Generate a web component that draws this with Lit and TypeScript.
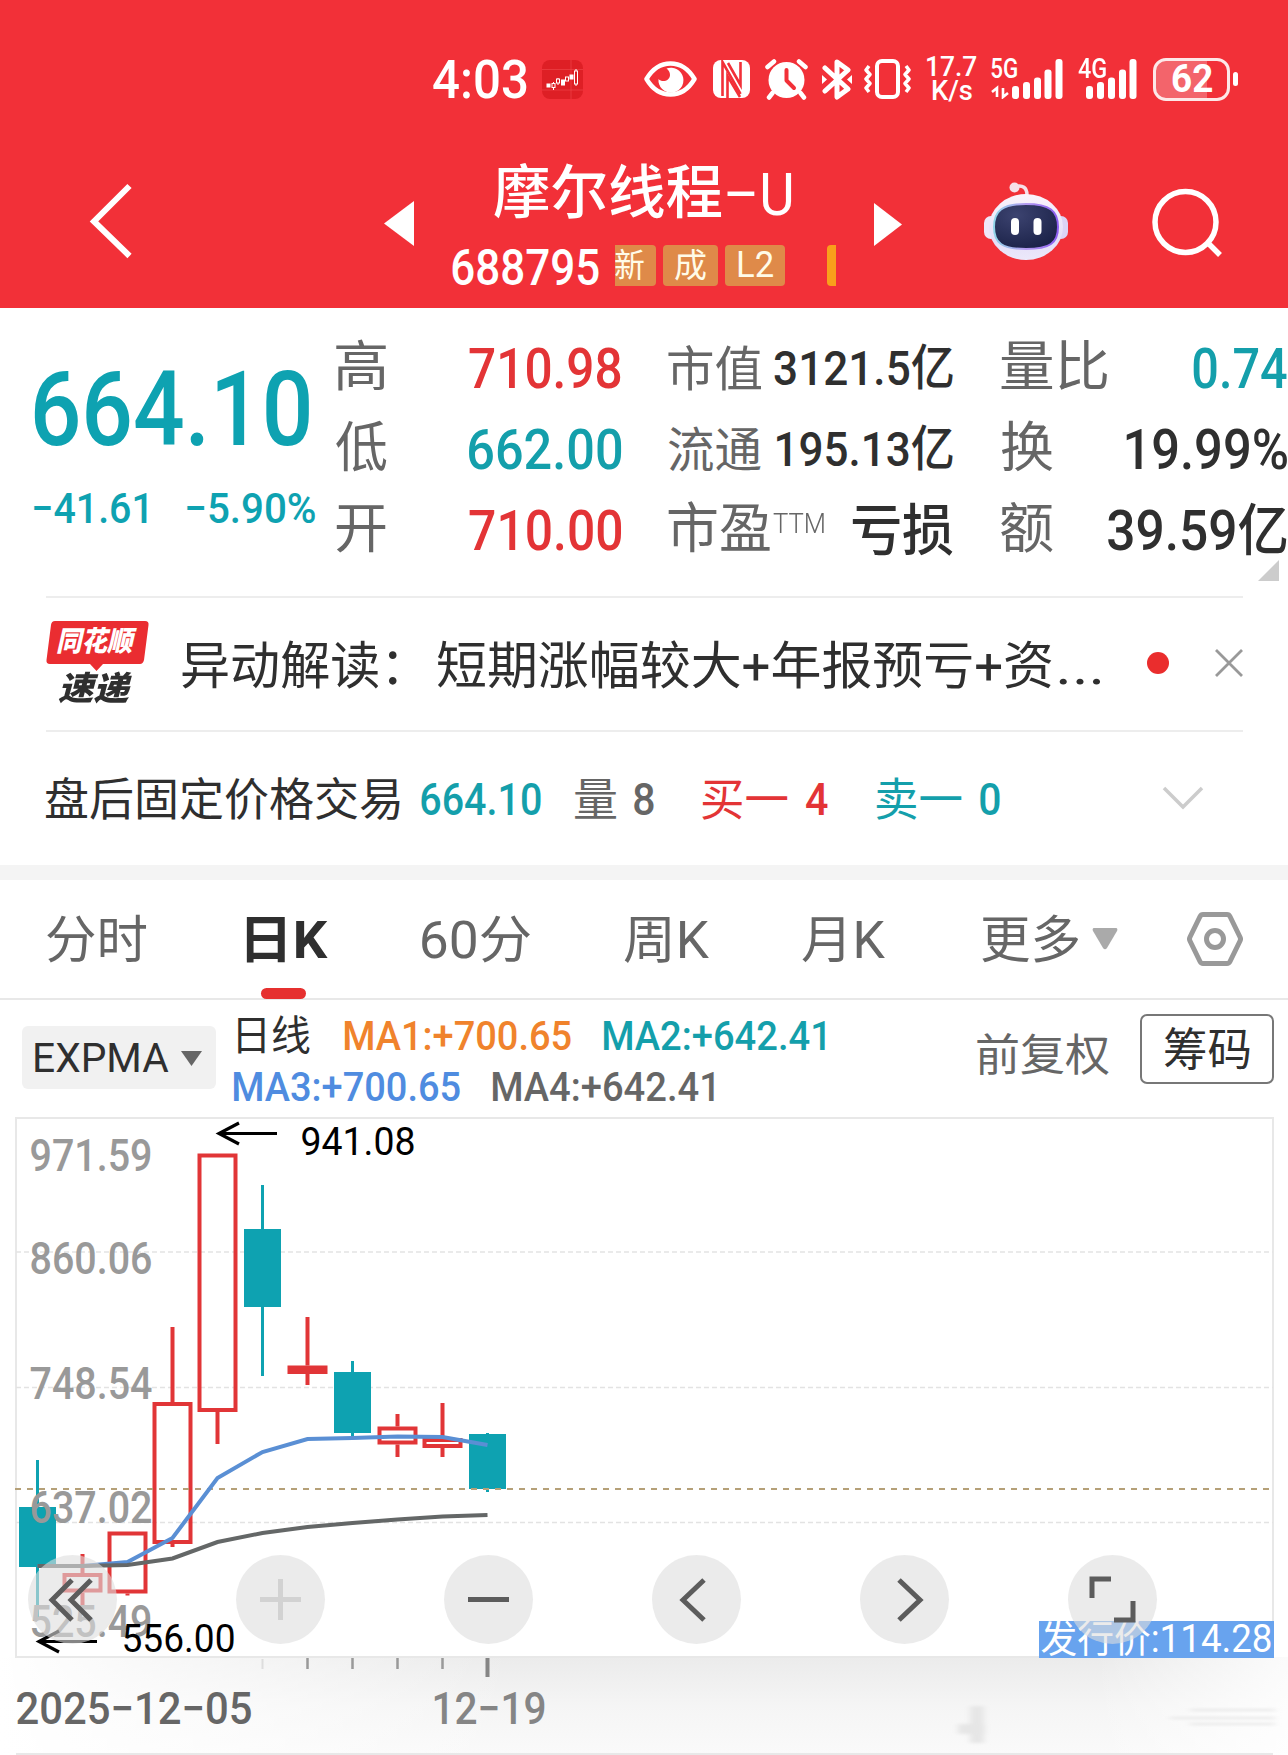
import { LitElement, html, svg, css } from "lit";
import { customElement, property } from "lit/decorators.js";

/** Single-line label whose visible glyphs span exactly `w` pixels. */
@customElement("fit-text")
class FitText extends LitElement {
  @property({ type: Number }) w = 100;
  @property() text = "";
  static styles = css`
    :host { display: block; flex: none; line-height: 1.2; white-space: pre; }
    span { display: inline-block; transform-origin: 0 50%; }
  `;
  render() {
    return html`<span>${this.text}</span>`;
  }
  updated() {
    const el = this.renderRoot.querySelector("span")!;
    const cs = getComputedStyle(el);
    const ctx = document.createElement("canvas").getContext("2d")!;
    ctx.font = `${cs.fontStyle} ${cs.fontWeight} ${cs.fontSize} ${cs.fontFamily}`;
    const m = ctx.measureText(this.text);
    const k = this.w / (m.actualBoundingBoxLeft + m.actualBoundingBoxRight);
    this.style.width = `${this.w}px`;
    el.style.transform = `translateX(${m.actualBoundingBoxLeft * k}px) scaleX(${k})`;
  }
}

const t = (text: string, w: number, cls = "") =>
  html`<fit-text class=${cls} .w=${w} .text=${text}></fit-text>`;

const FONT = css`"Roboto", "Noto Sans CJK SC", sans-serif`;

/* ---------- status bar ---------- */
@customElement("status-bar")
class StatusBar extends LitElement {
  static styles = css`
    :host { display: flex; align-items: center; height: 76px; padding: 41px 0 0 433px; color: #fff; }
    svg { display: block; flex: none; }
    .time { font-size: 53px; font-weight: 500; padding-top: 3px; }
    .app { margin-left: 15px; }
    .eye { margin-left: 61px; }
    .nfc { margin-left: 16px; }
    .alarm { margin-left: 15px; }
    .bt { margin-left: 14px; }
    .vib { margin-left: 12px; }
    .speed { display: flex; flex-direction: column; align-items: center; margin-left: 15px; font-size: 27px; font-weight: 500; width: 50px; }
    .speed fit-text { line-height: 24px; }
    .sig { display: grid; margin-left: 14px; }
    .sig > * { grid-area: 1 / 1; }
    .sig fit-text { font-size: 27px; font-weight: 500; line-height: 21px; }
    .sig.b { margin-left: 15px; }
    .batt { display: flex; align-items: center; margin-left: 16px; }
    .cell { box-sizing: border-box; width: 77px; height: 43px; border: 3px solid #fde8e8; border-radius: 13px; display: flex; align-items: center; justify-content: center;
      background: linear-gradient(90deg, #f3646b 51px, transparent 51px); font-size: 39px; font-weight: 700; }
    .nub { width: 5px; height: 14px; border-radius: 3px; background: #fff; margin-left: 3px; }
  `;
  bars(xs: number[]) {
    const tops = [27, 23, 18.5, 10.5, 0];
    return xs.map((x, i) => svg`<rect x=${x} y=${tops[i]} width="7" height=${40 - tops[i]} rx="3" fill="#fff"/>`);
  }
  render() {
    return html`
      ${t("4:03", 94, "time")}
      <svg class="app" width="41" height="39" viewBox="0 0 41 39">
        <rect width="41" height="39" rx="8" fill="#de1f25"/>
        <path d="M0 9.500H41M0 30H41M29 0V39" stroke="#f04a4e" stroke-width=".6"/>
        <g stroke="#fff" stroke-width="1" fill="none"><path d="M11.500 22V30M16 18V25M34 9V26"/>
          <rect x="5" y="24" width="3" height="3" fill="#fff"/><rect x="10" y="23.500" width="3" height="4" fill="#de1f25"/><rect x="14.500" y="19" width="3" height="4" fill="#de1f25"/><rect x="19.500" y="20" width="3" height="5" fill="#fff"/><rect x="23.500" y="17" width="3" height="4" fill="#de1f25"/><rect x="28" y="15" width="3" height="4" fill="#fff"/><rect x="32.500" y="11" width="3" height="13" fill="#de1f25"/></g>
      </svg>
      <svg class="eye" width="53" height="36" viewBox="0 0 53 36">
        <path d="M2.500 18C9 7 18 2.500 26.500 2.500S44 7 50.500 18C44 29 35 33.500 26.500 33.500S9 29 2.500 18Z" fill="none" stroke="#fff" stroke-width="4.500" stroke-linejoin="round"/>
        <path d="M22.500 7.500A12.500 12.500 0 1 1 14.500 18C18 22 26 20 26 14C26 11 24.500 9 22.500 7.500Z" fill="#fff"/>
      </svg>
      <svg class="nfc" width="37" height="38" viewBox="0 0 37 38">
        <rect width="37" height="38" rx="8" fill="#fff"/>
        <path d="M9.500 36V2L27.500 34M9.500 2" fill="none" stroke="#f23038" stroke-width="2.600"/>
        <path d="M27.500 2V25L15 3M14.500 38V16L27 37" fill="none" stroke="#f23038" stroke-width="2.600"/>
      </svg>
      <svg class="alarm" width="43" height="41" viewBox="0 0 43 41">
        <circle cx="21.500" cy="21" r="18" fill="#fff"/>
        <path d="M2.500 8L9 2.500M40.500 8L34 2.500M7.500 34L4 38.500M35.500 34L39 38.500" stroke="#fff" stroke-width="4.500" stroke-linecap="round"/>
        <path d="M21.500 11V21.500L29 29" fill="none" stroke="#f23038" stroke-width="4" stroke-linecap="round" stroke-linejoin="round"/>
      </svg>
      <svg class="bt" width="30" height="41" viewBox="0 0 30 41">
        <path d="M3 9L26 30L15 38V3L26 11L3 32" fill="none" stroke="#fff" stroke-width="5" stroke-linejoin="round" stroke-linecap="round"/>
        <path d="M0 16L5 20.500L0 25ZM30 16L25 20.500L30 25Z" fill="#fff"/>
      </svg>
      <svg class="vib" width="48" height="40" viewBox="0 0 48 40">
        <rect x="13" y="2" width="21" height="36" rx="5" fill="none" stroke="#fff" stroke-width="4"/>
        <path d="M5 7L2 11L6 15.500L2 20L6 24.500L2 29L5 33M42 7L45 11L41 15.500L45 20L41 24.500L45 29L42 33" fill="none" stroke="#fff" stroke-width="3.500" stroke-linejoin="round"/>
      </svg>
      <div class="speed">${t("17.7", 50)}${t("K/s", 40)}</div>
      <div class="sig">
        <svg width="72" height="40" viewBox="0 0 72 40">${this.bars([21, 32, 43, 53.5, 64.5])}
          <path d="M6 38V29L1 33M12 29V38L17 34" fill="none" stroke="#fff" stroke-width="2.600"/></svg>
        ${t("5G", 26)}
      </div>
      <div class="sig b">
        <svg width="59" height="40" viewBox="0 0 59 40">${this.bars([8, 19, 30, 41, 51.5])}</svg>
        ${t("4G", 28)}
      </div>
      <div class="batt"><div class="cell">${t("62", 40)}</div><div class="nub"></div></div>
    `;
  }
}

/* ---------- title bar ---------- */
@customElement("title-bar")
class TitleBar extends LitElement {
  static styles = css`
    :host { display: flex; height: 191px; color: #fff; }
    svg { display: block; flex: none; }
    .back { margin: 66px 0 0 88px; }
    .prev { margin: 84px 0 0 251px; }
    .mid { width: 385px; margin-left: 38px; display: flex; flex-direction: column; }
    .name { display: flex; gap: 5px; margin: 42px 0 0 42px; height: 70px; font-size: 58px; font-weight: 500; }
    .name .u { font-size: 60px; font-weight: 400; }
    .code { display: flex; align-items: center; height: 41px; margin-top: 16px; }
    .num { font-size: 50px; font-weight: 500; width: 147px; padding-top: 4px; }
    .tags { display: flex; margin-left: 16px; width: 221px; overflow: hidden; }
    .tag { box-sizing: border-box; height: 41px; border-radius: 4px; background: #df8a49; display: flex; align-items: center; justify-content: center; font-size: 33px; color: #fffbe8; flex: none; }
    .n { width: 41px; border-radius: 0 4px 4px 0; justify-content: flex-start; margin-right: 7px; }
    .c { width: 55px; margin-right: 7px; }
    .l { width: 60px; font-size: 36px; }
    .more { width: 9px; background: #f9a01b; margin-left: 42px; border-radius: 4px 0 0 4px; }
    .next { margin: 86px 0 0 37px; }
    .bot { margin: 65px 0 0 82px; }
    .find { margin: 71px 0 0 84px; }
  `;
  render() {
    return html`
      <svg class="back" width="45" height="76" viewBox="0 0 45 76"><path d="M41.500 3L6 38.500L41.500 73" fill="none" stroke="#fff" stroke-width="6"/></svg>
      <svg class="prev" width="30" height="45" viewBox="0 0 30 45"><path d="M30 0V45L0 22.500Z" fill="#fff"/></svg>
      <div class="mid">
        <div class="name">${t("摩尔线程", 228)}${t("–U", 64, "u")}</div>
        <div class="code">
          ${t("688795", 147, "num")}
          <div class="tags">
            <div class="tag n">${t("新", 29)}</div><div class="tag c">${t("成", 31)}</div><div class="tag l">${t("L2", 35)}</div><div class="tag more"></div>
          </div>
        </div>
      </div>
      <svg class="next" width="28" height="43" viewBox="0 0 28 43"><path d="M0 0V43L28 21.500Z" fill="#fff"/></svg>
      <svg class="bot" width="84" height="78" viewBox="0 0 84 78">
        <defs>
          <linearGradient id="shell" x1="0" y1="0" x2="0" y2="1"><stop offset="0" stop-color="#fbf4fb"/><stop offset=".7" stop-color="#e4def8"/><stop offset="1" stop-color="#ece8fa"/></linearGradient>
          <linearGradient id="rim" x1="0" y1="0" x2="1" y2="0"><stop offset="0" stop-color="#8fd3e8"/><stop offset=".5" stop-color="#b49af0"/><stop offset="1" stop-color="#8b5cf0"/></linearGradient>
          <radialGradient id="visor" cx=".35" cy=".25" r=".8"><stop offset="0" stop-color="#3c4370"/><stop offset="1" stop-color="#1b2248"/></radialGradient>
        </defs>
        <path d="M30 5C39 2 43 6 43 13" fill="none" stroke="#f6dfe8" stroke-width="3.500"/><circle cx="30.500" cy="5.500" r="5" fill="#f6dfe8"/>
        <rect x="0" y="34" width="14" height="23" rx="7" fill="#efe6f8"/><rect x="70" y="34" width="14" height="23" rx="7" fill="#dcd4f6"/>
        <ellipse cx="42" cy="45" rx="37" ry="33" fill="url(#shell)"/>
        <path d="M42 22C66 22 74 29 74 45S66 67 42 67S10 61 10 45S18 22 42 22Z" fill="url(#visor)" stroke="url(#rim)" stroke-width="2"/>
        <rect x="27" y="36" width="8" height="17" rx="4" fill="#fff"/><rect x="49.500" y="36" width="8" height="17" rx="4" fill="#fff"/>
      </svg>
      <svg class="find" width="72" height="70" viewBox="0 0 72 70"><circle cx="33.500" cy="34" r="30.500" fill="none" stroke="#fff" stroke-width="5.500"/><path d="M55 54L68 67" stroke="#fff" stroke-width="5.500"/></svg>
    `;
  }
}

/* ---------- quote panel ---------- */
@customElement("quote-panel")
class QuotePanel extends LitElement {
  static styles = css`
    :host { display: grid; grid-template-columns: 336px 285px 332px 334px; height: 288px; position: relative; color: #2f2f2f; }
    .price { padding: 40px 0 0 34px; color: #0ea2b1; }
    .big { font-size: 104px; font-weight: 500; }
    .chg { display: flex; gap: 40px; font-size: 43px; font-weight: 500; margin-top: 10px; }
    .col { padding-top: 21px; }
    .c2 { padding-left: 47px; }
    .c3 { padding-left: 48px; }
    .row { height: 81px; display: flex; align-items: center; justify-content: space-between; }
    .lab { font-size: 54px; color: #666; margin-top: -3px; }
    .s { font-size: 48px; margin-top: 0; }
    .val { font-size: 56px; font-weight: 500; }
    .m { font-size: 49px; }
    .up { color: #e33436; } .down { color: #149fab; }
    .ttm { font-size: 28px; font-weight: 300; color: #666; margin: -16px 28px 0 3px; }
    .corner { position: absolute; right: 9px; bottom: 15px; }
  `;
  render() {
    return html`
      <div class="price">${t("664.10", 275, "big")}<div class="chg">${t("−41.61", 113)}${t("−5.90%", 128)}</div></div>
      <div class="col">
        <div class="row">${t("高", 50, "lab")}${t("710.98", 152, "val up")}</div>
        <div class="row">${t("低", 51, "lab")}${t("662.00", 152, "val down")}</div>
        <div class="row">${t("开", 50, "lab")}${t("710.00", 152, "val up")}</div>
      </div>
      <div class="col c2">
        <div class="row">${t("市值", 93, "lab s")}${t("3121.5亿", 179, "val m")}</div>
        <div class="row">${t("流通", 93, "lab s")}${t("195.13亿", 176, "val m")}</div>
        <div class="row">${t("市盈", 102, "lab")}${t("TTM", 51, "ttm")}${t("亏损", 101, "val")}</div>
      </div>
      <div class="col c3">
        <div class="row">${t("量比", 106, "lab")}${t("0.74", 94, "val down")}</div>
        <div class="row">${t("换", 52, "lab")}${t("19.99%", 161, "val")}</div>
        <div class="row">${t("额", 52, "lab")}${t("39.59亿", 179, "val")}</div>
      </div>
      <svg class="corner" width="21" height="21" viewBox="0 0 21 21"><path d="M21 0V21H0Z" fill="#ccc"/></svg>
    `;
  }
}

/* ---------- news + after-hours rows ---------- */
@customElement("info-rows")
class InfoRows extends LitElement {
  static styles = css`
    :host { display: block; color: #2f2f2f; }
    .news, .after { display: flex; align-items: center; margin: 0 45px 0 46px; border-top: 2px solid #ededed; box-sizing: border-box; height: 134px; }
    .news { padding-bottom: 2px; }
    .after { height: 135px; }
    .logo { display: flex; flex-direction: column; align-items: flex-start; width: 103px; }
    .flag { display: grid; width: 103px; height: 50px; }
    .flag > * { grid-area: 1 / 1; }
    .flag fit-text { margin: 6px 0 0 11px; font: italic 900 28px/30px "Roboto", "Noto Sans CJK SC", sans-serif; color: #fff; }
    .sub { font: italic 900 33px/34px "Roboto", "Noto Sans CJK SC", sans-serif; margin: 1px 0 0 12px; }
    .txt { font-size: 51px; margin-left: 33px; padding-top: 7px; }
    .t2 { margin-left: 40px; }
    .t3 { margin-left: 7px; }
    .dot { width: 22px; height: 22px; border-radius: 50%; background: #ea2d2d; margin-left: 46px; }
    .x { margin-left: 46px; }
    .after { font-size: 45px; }
    .after fit-text { padding-top: 5px; }
    .after .num { font-weight: 500; padding-top: 3px; }
    .up { color: #e33436; } .down { color: #149fab; } .g { color: #666; }
    .a { margin-left: 21px; } .b { margin-left: 34px; } .c { margin-left: 18px; } .d { margin-left: 48px; }
    .chev { margin-left: 162px; margin-top: -2px; }
    .band { height: 15px; background: #f4f4f4; }
  `;
  render() {
    return html`
      <div class="news">
        <div class="logo">
          <div class="flag"><svg width="103" height="50" viewBox="0 0 103 50"><path d="M9 0H99Q103 0 102.500 4L98 39Q97 43 94 43H57L50.500 50L44 43H4Q0 43 .5 39L5 4Q5.500 0 9 0Z" fill="#ea2d31"/></svg>${t("同花顺", 80)}</div>
          ${t("速递", 75, "sub")}
        </div>
        ${t("异动解读：", 215, "txt")}${t("短期涨幅较大+年报预亏+资", 615, "txt t2")}${t("...", 42, "txt t3")}
        <div class="dot"></div>
        <svg class="x" width="28" height="28" viewBox="0 0 28 28"><path d="M1 1L27 27M27 1L1 27" stroke="#999" stroke-width="2.800"/></svg>
      </div>
      <div class="after">
        ${t("盘后固定价格交易", 354)}
        ${t("664.10", 120, "num down a")}
        ${t("量", 41, "g b")}${t("8", 20, "num g c")}
        ${t("买一", 86, "up d")}${t("4", 22, "num up c")}
        ${t("卖一", 86, "down d")}${t("0", 20, "num down c")}
        <svg class="chev" width="42" height="24" viewBox="0 0 42 24"><path d="M2 2L21 21L40 2" fill="none" stroke="#ccc" stroke-width="3.500"/></svg>
      </div>
      <div class="band"></div>
    `;
  }
}

/* ---------- period tabs + indicator legend ---------- */
@customElement("chart-tabs")
class ChartTabs extends LitElement {
  static styles = css`
    :host { display: block; color: #666; }
    .tabs { display: flex; align-items: center; box-sizing: border-box; height: 120px; padding-left: 47px; border-bottom: 2px solid #e8e8e8; font-size: 51px; }
    .tabs > fit-text { padding-top: 4px; }
    .on { display: flex; flex-direction: column; align-items: flex-start; margin: 31px 0 0 99px; color: #2f2f2f; font-weight: 700; }
    .bar { width: 45px; height: 11px; border-radius: 6px; background: #e6302f; margin: 17px 0 0 15px; }
    .t3 { margin-left: 94px; } .t4 { margin-left: 94px; } .t5 { margin-left: 93px; } .t6 { margin-left: 97px; }
    .tri { margin-left: 13px; }
    .hex { margin-left: 69px; }
    .legend { display: flex; height: 117px; }
    .ind { width: 194px; height: 63px; margin: 26px 0 0 22px; box-sizing: border-box; padding: 2px 0 0 13px; border-radius: 6px; background: #f1f1f1; display: flex; align-items: center; gap: 12px; font-size: 41px; color: #2f2f2f; }
    .lines { margin: 11px 0 0 17px; width: 744px; font-size: 41px; font-weight: 500; }
    .lines div { display: flex; height: 51px; align-items: center; }
    .day { color: #2f2f2f; margin-left: 5px; font-weight: 400; }
    .m1 { color: #f0832c; margin-left: 34px; } .m2 { color: #149fab; margin-left: 32px; }
    .m3 { color: #4f8ce0; } .m4 { margin-left: 32px; }
    .adj { font-size: 44px; margin-top: 30px; }
    .chip { box-sizing: border-box; width: 134px; height: 70px; margin: 14px 0 0 31px; border: 2px solid #777; border-radius: 7px; display: flex; align-items: center; justify-content: center; font-size: 45px; color: #2f2f2f; padding-top: 4px; }
  `;
  render() {
    return html`
      <div class="tabs">
        ${t("分时", 100)}
        <div class="on">${t("日K", 82)}<div class="bar"></div></div>
        ${t("60分", 108, "t3")}${t("周K", 85, "t4")}${t("月K", 83, "t5")}${t("更多", 97, "t6")}
        <svg class="tri" width="26" height="22" viewBox="0 0 26 22"><path d="M1.500 0H24.500Q26 1 25 3L15 20Q13 22.500 11 20L1 3Q0 1 1.500 0Z" fill="#aaa"/></svg>
        <svg class="hex" width="56" height="54" viewBox="0 0 56 54"><path d="M16 2.500H40Q42 2.500 43 4.500L53 25Q54 27 53 29L43 49.500Q42 51.500 40 51.500H16Q14 51.500 13 49.500L3 29Q2 27 3 25L13 4.500Q14 2.500 16 2.500Z" fill="none" stroke="#999" stroke-width="5"/><circle cx="28" cy="27" r="8.500" fill="none" stroke="#999" stroke-width="5"/></svg>
      </div>
      <div class="legend">
        <div class="ind">${t("EXPMA", 134)}<svg width="21" height="15" viewBox="0 0 21 15"><path d="M0 0H21L10.500 15Z" fill="#666"/></svg></div>
        <div class="lines">
          <div>${t("日线", 72, "day")}${t("MA1:+700.65", 227, "m1")}${t("MA2:+642.41", 222, "m2")}</div>
          <div>${t("MA3:+700.65", 227, "m3")}${t("MA4:+642.41", 222, "m4")}</div>
        </div>
        ${t("前复权", 132, "adj")}
        <div class="chip">${t("筹码", 86)}</div>
      </div>
    `;
  }
}

/* ---------- candlestick chart ---------- */
interface Candle { x: number; up: boolean; top: number; bottom: number; hi: number; lo: number; }
const CANDLES: Candle[] = [
  { x: 37.5, up: false, top: 1507, bottom: 1567, hi: 1460, lo: 1620 },
  { x: 82.5, up: true, top: 1573, bottom: 1592.5, hi: 1554, lo: 1606 },
  { x: 127.5, up: true, top: 1531.5, bottom: 1593.5, hi: 1531.5, lo: 1595.5 },
  { x: 172.5, up: true, top: 1402, bottom: 1544, hi: 1327, lo: 1547 },
  { x: 217.5, up: true, top: 1153.5, bottom: 1412, hi: 1153.5, lo: 1444 },
  { x: 262.5, up: false, top: 1229, bottom: 1307, hi: 1185, lo: 1376 },
  { x: 307.5, up: true, top: 1365.5, bottom: 1374, hi: 1317, lo: 1385 },
  { x: 352.5, up: false, top: 1372, bottom: 1433, hi: 1361, lo: 1436 },
  { x: 397.5, up: true, top: 1426.5, bottom: 1444.5, hi: 1414, lo: 1457 },
  { x: 442.5, up: true, top: 1438, bottom: 1448, hi: 1403, lo: 1457 },
  { x: 487.5, up: false, top: 1434, bottom: 1489, hi: 1433, lo: 1492 },
];
const FAST = [1566, 1566, 1562, 1538, 1478, 1452, 1439, 1438, 1436.5, 1437, 1445];
const SLOW = [1566, 1566, 1565, 1558.5, 1542, 1533, 1527, 1523, 1519.5, 1516.5, 1515];
const points = (ys: number[]) => ys.map((y, i) => `${CANDLES[i].x},${y}`).join(" ");

@customElement("k-chart")
class KChart extends LitElement {
  static styles = css`
    :host { display: block; position: relative; height: 638px; }
    .plot { display: block; }
    .axis text, .dates text { font-size: 45px; font-weight: 500; fill: #999; }
    .mark text { font-size: 38px; fill: #000; }
    .issue { font-size: 38px; fill: #fff; }
    .dates .first { fill: #666; }
    .dates .last { fill: #858585; }
    .tools { position: absolute; left: 28px; top: 438px; display: flex; gap: 119px; }
    .btn { width: 89px; height: 89px; border-radius: 50%; background: rgba(222, 222, 222, 0.6); }
    .btn svg { display: block; fill: none; stroke: #5c5c5c; stroke-width: 5; }
    .btn .off { stroke: #d2d2d2; }
  `;
  candle(c: Candle) {
    const col = c.up ? "#e13537" : "#0ea2b1";
    const wick = svg`<path d="M${c.x} ${c.hi}V${c.up ? c.top : c.lo}M${c.x} ${c.bottom}V${c.lo}" stroke=${col} stroke-width=${c.up ? 4 : 3}/>`;
    if (!c.up) return svg`${wick}<rect x=${c.x - 18.5} y=${c.top} width="37" height=${c.bottom - c.top} fill=${col}/>`;
    if (c.bottom - c.top < 9) return svg`${wick}<rect x=${c.x - 20} y=${c.top} width="40" height=${c.bottom - c.top} fill=${col}/>`;
    return svg`${wick}<rect x=${c.x - 18} y=${c.top + 2} width="36" height=${c.bottom - c.top - 4} fill="none" stroke=${col} stroke-width="4"/>`;
  }
  label(s: string, x: number, y: number, w: number, cls = "") {
    return svg`<text class=${cls} x=${x - 1.5} y=${y} textLength=${w + 3} lengthAdjust="spacingAndGlyphs">${s}</text>`;
  }
  btn(d: string, cls = "") {
    return html`<div class="btn"><svg width="89" height="89" viewBox="0 0 89 89"><path class=${cls} d=${d}/></svg></div>`;
  }
  render() {
    return html`
      <svg class="plot" width="1288" height="638" viewBox="0 1117 1288 638">
        <defs>
          <linearGradient id="foot" x1="0" y1="0" x2="0" y2="1"><stop offset="0" stop-color="#ebebeb"/><stop offset=".5" stop-color="#f5f5f5"/><stop offset="1" stop-color="#fafafa"/></linearGradient>
          <linearGradient id="fade" x1="0" y1="0" x2="1" y2="0"><stop offset="0" stop-color="#fff"/><stop offset=".1" stop-color="#fff" stop-opacity=".7"/><stop offset=".4" stop-color="#fff" stop-opacity="0"/><stop offset=".85" stop-color="#fff" stop-opacity="0"/><stop offset="1" stop-color="#fff" stop-opacity=".8"/></linearGradient>
          <filter id="soft" filterUnits="userSpaceOnUse" x="940" y="1690" width="348" height="65"><feGaussianBlur stdDeviation="3 1.500"/></filter>
        </defs>
        <rect x="0" y="1657" width="1288" height="98" fill="url(#foot)"/><rect x="0" y="1657" width="1288" height="98" fill="url(#fade)"/>
        <g stroke="#e6e6e6" filter="url(#soft)"><path d="M977 1706V1743" stroke-width="14"/><path d="M958 1729H985" stroke-width="10"/><path d="M1190 1710H1275M1170 1718H1275M1190 1724H1275" stroke-width="2"/></g>
        <path d="M16 1754H1273" stroke="#e8e8e8" stroke-width="2"/>
        <rect x="16" y="1118" width="1257" height="539" fill="none" stroke="#e8e8e8" stroke-width="2"/>
        <path d="M16 1252H1273M16 1387.500H1273M16 1522.500H1273" stroke="#e3e3e3" stroke-width="1.500" stroke-dasharray="5 3"/>
        ${CANDLES.map((c) => this.candle(c))}
        <path d="M15 1489H1273" stroke="#b5a078" stroke-width="2" stroke-dasharray="6 6"/>
        <polyline points=${points(FAST)} fill="none" stroke="#5a8fd4" stroke-width="4"/>
        <polyline points=${points(SLOW)} fill="none" stroke="#646767" stroke-width="4"/>
        <g class="axis">
          ${this.label("971.59", 31, 1171, 120)}${this.label("860.06", 31, 1274, 120)}${this.label("748.54", 31, 1399, 120)}${this.label("637.02", 31, 1523, 120)}${this.label("525.49", 31, 1637, 120)}
        </g>
        <g class="mark">
          <path d="M277 1133.500H219M239 1123L219 1133.500L239 1144M97 1641.500H39M59 1631L39 1641.500L59 1652" fill="none" stroke="#000" stroke-width="3.200"/>
          ${this.label("941.08", 302, 1155, 112)}${this.label("556.00", 123, 1652, 111)}
        </g>
        <rect x="1039" y="1621" width="235" height="37" fill="#68a3ee"/>
        ${this.label("发行价:114.28", 1042, 1652, 229, "issue")}
        <path d="M262.500 1659V1669" stroke="#ddd" stroke-width="2"/>
        <path d="M307.500 1658V1669M352.500 1658V1669M397.500 1658V1669M442.500 1658V1669" stroke="#999" stroke-width="2.500"/>
        <path d="M487.500 1658V1677" stroke="#858585" stroke-width="4"/>
        <g class="dates">${this.label("2025−12−05", 17, 1724, 234, "first")}${this.label("12−19", 433, 1724, 112, "last")}</g>
      </svg>
      <div class="tools">
        ${this.btn("M44 25L24 45L44 65M63 25L43 45L63 65")}
        ${this.btn("M24 44.500H65M44.500 24V65", "off")}
        ${this.btn("M24 44.500H65")}
        ${this.btn("M52 25L31 45L52 65")}
        ${this.btn("M39 25L60 45L39 65")}
        ${this.btn("M24 43V24H43M46 65H65V46")}
      </div>
    `;
  }
}

@customElement("app-root")
class AppRoot extends LitElement {
  static styles = css`
    :host { display: block; width: 1288px; height: 1755px; overflow: hidden; background: #fff; font-family: ${FONT}; }
    .head { background: #f23038; height: 308px; }
  `;
  render() {
    return html`
      <div class="head"><status-bar></status-bar><title-bar></title-bar></div>
      <quote-panel></quote-panel>
      <info-rows></info-rows>
      <chart-tabs></chart-tabs>
      <k-chart></k-chart>
    `;
  }
}
